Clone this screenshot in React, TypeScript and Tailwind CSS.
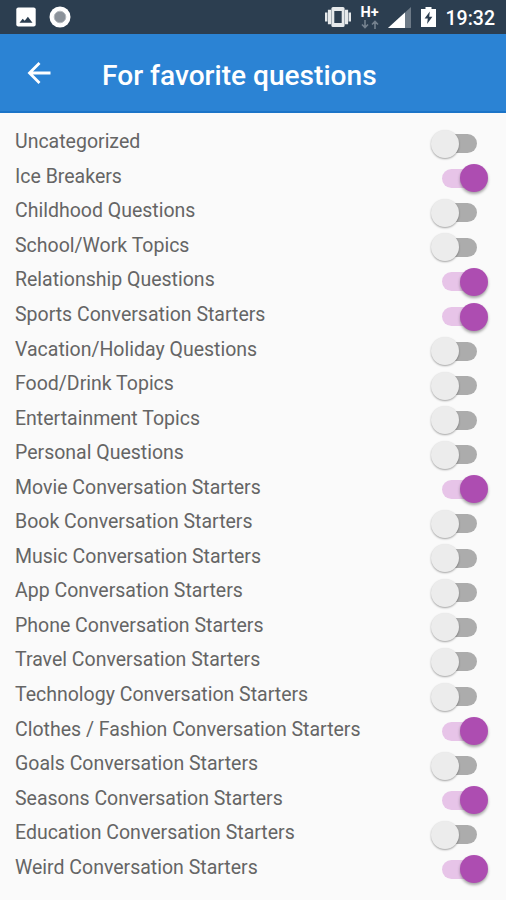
import { useState } from "react";

type Category = {
  name: string;
  on: boolean;
};

const initial: Category[] = [
  { name: "Uncategorized", on: false },
  { name: "Ice Breakers", on: true },
  { name: "Childhood Questions", on: false },
  { name: "School/Work Topics", on: false },
  { name: "Relationship Questions", on: true },
  { name: "Sports Conversation Starters", on: true },
  { name: "Vacation/Holiday Questions", on: false },
  { name: "Food/Drink Topics", on: false },
  { name: "Entertainment Topics", on: false },
  { name: "Personal Questions", on: false },
  { name: "Movie Conversation Starters", on: true },
  { name: "Book Conversation Starters", on: false },
  { name: "Music Conversation Starters", on: false },
  { name: "App Conversation Starters", on: false },
  { name: "Phone Conversation Starters", on: false },
  { name: "Travel Conversation Starters", on: false },
  { name: "Technology Conversation Starters", on: false },
  { name: "Clothes / Fashion Conversation Starters", on: true },
  { name: "Goals Conversation Starters", on: false },
  { name: "Seasons Conversation Starters", on: true },
  { name: "Education Conversation Starters", on: false },
  { name: "Weird Conversation Starters", on: true },
];

function StatusBar() {
  return (
    <div className="flex h-[34px] items-center bg-[#2c3e50] pr-[11px] pl-4 text-white">
      <svg className="h-[20px] w-[20px]" viewBox="0 0 20 20">
        <rect x="0.3" y="0.5" width="19.4" height="19" rx="2" fill="#fff" />
        <path d="M3.5 15.8l3.2-4 2 2 3.2-4 4.6 6z" fill="#2c3e50" />
      </svg>
      <svg className="ml-[13px] h-[22px] w-[22px]" viewBox="0 0 22 22">
        <circle cx="11" cy="11" r="10.5" fill="#fff" />
        <circle cx="11" cy="11" r="5.8" fill="#8b929a" stroke="#b4b9be" />
      </svg>
      <svg className="ml-auto h-[22px] w-[28px]" viewBox="0 0 28 22" fill="#e6e9eb">
        <path d="M1 6.5h2.4v9H1zM24.6 6.5H27v9h-2.4zM3.9 3.8h3.2v14.4H3.9zM20.9 3.8h3.2v14.4h-3.2z" />
        <path fillRule="evenodd" d="M9 1h10a1.6 1.6 0 011.6 1.6v16.8A1.6 1.6 0 0119 21H9a1.6 1.6 0 01-1.6-1.6V2.6A1.6 1.6 0 019 1zm1.3 4v12h7.4V5z" />
      </svg>
      <div className="ml-[8px] flex w-[20px] flex-col items-center">
        <span className="text-[14.5px] leading-[14px] font-bold">H+</span>
        <svg className="h-[9px] w-[18px]" viewBox="0 0 18 9" fill="none" stroke="#74818e" strokeWidth="1.6">
          <path d="M4 0v7M1 4.5l3 3 3-3M14 9V2M11 4.5l3-3 3 3" />
        </svg>
      </div>
      <svg className="ml-[8px] h-[21px] w-[23px]" viewBox="0 0 23 21">
        <path d="M0 21L23 0v21z" fill="#6d7a87" />
        <path d="M0 21L17 5.5V21z" fill="#fff" />
      </svg>
      <svg className="ml-[10px] h-[20px] w-[15px]" viewBox="0 0 15 20">
        <path d="M4.5 0h6v2H15v18H0V2h4.5z" fill="#fff" />
        <path d="M8.8 4.5L3.6 11.6h3.2l-.7 5.4 5.3-7.3H8.2z" fill="#2c3e50" />
      </svg>
      <span className="ml-[10px] pt-[3px] text-[19.5px] font-medium">19:32</span>
    </div>
  );
}

function Toggle({ on, onClick }: { on: boolean; onClick: () => void }) {
  return (
    <button
      role="switch"
      aria-checked={on}
      onClick={onClick}
      className={`flex h-[28px] w-[57px] items-center rounded-full ${on ? "justify-end" : "justify-start"}`}
    >
      {on ? (
        <>
          <span className="h-[19px] w-[32px] rounded-l-full bg-[#e7c4e8]" />
          <span className="-ml-[14px] h-[28px] w-[28px] rounded-full bg-[#ad4db1] shadow-[0_2px_3px_rgba(0,0,0,0.35)]" />
        </>
      ) : (
        <>
          <span className="z-10 h-[28px] w-[28px] rounded-full bg-[#ececec] shadow-[0_1px_2px_rgba(0,0,0,0.35)]" />
          <span className="-ml-[14px] h-[19px] w-[32px] rounded-r-full bg-[#acacac]" />
        </>
      )}
    </button>
  );
}

export default function App() {
  const [categories, setCategories] = useState(initial);

  const toggle = (name: string) =>
    setCategories((list) => list.map((c) => (c.name === name ? { ...c, on: !c.on } : c)));

  return (
    <div className="h-[900px] w-[506px] overflow-hidden bg-[#fafafa] font-['Roboto',sans-serif]">
      <StatusBar />
      <header className="flex h-[79px] items-center border-b-2 border-[#1b74c8] bg-[#2b83d4] text-white">
        <svg className="ml-[27px] h-[22px] w-[24px]" viewBox="0 0 24 22" fill="none" stroke="#fff" strokeWidth="2.8">
          <path d="M23.5 11H2.5M12.5 1L2.5 11l10 10" />
        </svg>
        <h1 className="ml-[51px] pt-[6px] text-[28.1px] leading-[40px] font-medium">For favorite questions</h1>
      </header>
      <ul className="pt-[13.5px]">
        {categories.map((c) => (
          <li key={c.name} className="flex h-[34.55px] items-center justify-between pr-[18px] pl-[15px]">
            <span className="-mt-[3px] text-[19.5px] leading-[24px] text-[#656565]">{c.name}</span>
            <Toggle on={c.on} onClick={() => toggle(c.name)} />
          </li>
        ))}
      </ul>
    </div>
  );
}
